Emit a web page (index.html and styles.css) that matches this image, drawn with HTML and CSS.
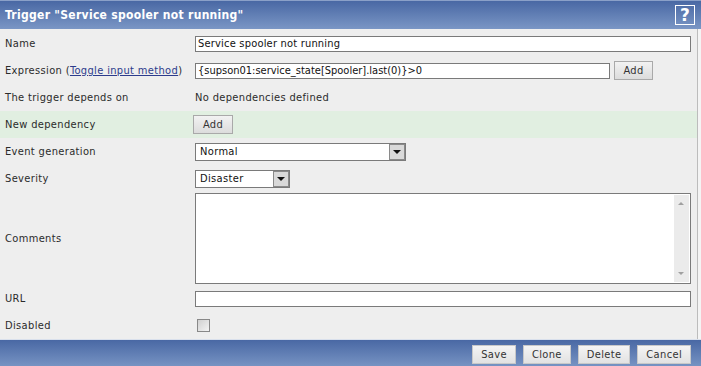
FILE: index.html
```html
<!DOCTYPE html>
<html lang="en">

<head>
    <meta charset="UTF-8">
    <title>Trigger</title>
    <link rel="stylesheet" href="styles.css">
</head>

<body>
    <div class="dialog">
        <div class="title-bar">
            <span class="title">Trigger "Service spooler not running"</span>
            <span class="help">?</span>
        </div>

        <div class="form-body">
            <div class="row">
                <div class="label">Name</div>
                <div class="field"><input class="text-input wide" type="text" value="Service spooler not running"></div>
            </div>
            <div class="row">
                <div class="label">Expression (<a href="#">Toggle input method</a>)</div>
                <div class="field">
                    <input class="text-input expr" type="text" value="{supson01:service_state[Spooler].last(0)}>0">
                    <button class="btn add-expr" type="button">Add</button>
                </div>
            </div>
            <div class="row">
                <div class="label">The trigger depends on</div>
                <div class="field plain">No dependencies defined</div>
            </div>
            <div class="row green">
                <div class="label">New dependency</div>
                <div class="field"><button class="btn add-dep" type="button">Add</button></div>
            </div>
            <div class="row">
                <div class="label">Event generation</div>
                <div class="field">
                    <div class="select event">Normal<span class="arrow"><i></i></span></div>
                </div>
            </div>
            <div class="row">
                <div class="label">Severity</div>
                <div class="field">
                    <div class="select severity">Disaster<span class="arrow"><i></i></span></div>
                </div>
            </div>
            <div class="row comments">
                <div class="label">Comments</div>
                <div class="field">
                    <div class="textarea">
                        <div class="scrollbar"><span class="up"></span><span class="down"></span></div>
                    </div>
                </div>
            </div>
            <div class="row">
                <div class="label">URL</div>
                <div class="field"><input class="text-input wide" type="text" value=""></div>
            </div>
            <div class="row">
                <div class="label">Disabled</div>
                <div class="field"><span class="checkbox"></span></div>
            </div>
        </div>

        <div class="footer">
            <button class="btn foot" type="button">Save</button>
            <button class="btn foot" type="button">Clone</button>
            <button class="btn foot" type="button">Delete</button>
            <button class="btn foot" type="button">Cancel</button>
        </div>
    </div>
</body>

</html>
```

FILE: styles.css
```css
body {
    margin: 0;
    background: #f4f4f4;
    font-family: "DejaVu Sans Condensed", "DejaVu Sans", sans-serif;
    font-size: 11px;
    letter-spacing: 0.35px;
    color: #2b2b2b;
}

.dialog {
    width: 701px;
    height: 366px;
    overflow: hidden;
}

.title-bar {
    height: 29px;
    display: flex;
    align-items: center;
    justify-content: space-between;
    padding: 0 6px 0 5px;
    box-sizing: border-box;
    background: linear-gradient(#4968a4, #7a96c5);
    border-top: 1px solid #8aa0c8;
}

.title {
    color: white;
    font-weight: bold;
    font-size: 12px;
    letter-spacing: 0.3px;
}

.help {
    width: 18px;
    height: 18px;
    border: 1px solid white;
    color: white;
    font-weight: bold;
    font-size: 17px;
    line-height: 18px;
    text-align: center;
    font-family: "DejaVu Sans", sans-serif;
}

.form-body {
    width: 697px;
    border-right: 1px solid #bcbcbc;
    background: #eeeeee;
    padding-top: 1px;
}

.row {
    display: flex;
    align-items: center;
    height: 27px;
    padding-left: 5px;
}

.row.green {
    background: #e1efe1;
}

.row.comments {
    height: 93px;
}

.label {
    width: 190px;
}

.label a {
    color: #2c3b8c;
}

.field {
    display: flex;
    align-items: center;
}

.text-input {
    box-sizing: border-box;
    height: 16px;
    border: 1px solid #7a7a7a;
    background: white;
    padding: 0 2px;
    font: inherit;
    letter-spacing: 0.2px;
    color: #111;
}

.text-input.wide {
    width: 496px;
}

.text-input.expr {
    width: 415px;
    letter-spacing: 0;
}

.btn {
    box-sizing: border-box;
    height: 19px;
    border: 1px solid #a9a9a9;
    background: linear-gradient(#f2f2f2, #dcdcdc);
    font: inherit;
    letter-spacing: 0.35px;
    color: #333;
    padding: 0 8px;
    cursor: pointer;
}

.add-expr {
    margin-left: 4px;
    width: 39px;
}

.add-dep {
    margin-left: -2px;
    width: 40px;
}

.select {
    position: relative;
    box-sizing: border-box;
    height: 18px;
    border: 1px solid #7a7a7a;
    background: white;
    padding-left: 4px;
    line-height: 16px;
    color: #111;
}

.select.event {
    width: 211px;
}

.select.severity {
    width: 95px;
}

.arrow {
    position: absolute;
    right: 0;
    top: 0;
    width: 16px;
    height: 16px;
    box-sizing: border-box;
    border: 1px solid #8a8a8a;
    background: #d9d9d9;
    display: flex;
    align-items: center;
    justify-content: center;
}

.arrow i {
    width: 0;
    height: 0;
    border-left: 4px solid transparent;
    border-right: 4px solid transparent;
    border-top: 4px solid #111;
}

.textarea {
    position: relative;
    box-sizing: border-box;
    width: 496px;
    height: 91px;
    border: 1px solid #7a7a7a;
    background: white;
}

.scrollbar {
    position: absolute;
    right: 1px;
    top: 1px;
    bottom: 1px;
    width: 15px;
    background: #ebebeb;
}

.scrollbar .up,
.scrollbar .down {
    position: absolute;
    left: 4px;
    width: 0;
    height: 0;
    border-left: 3px solid transparent;
    border-right: 3px solid transparent;
}

.scrollbar .up {
    top: 7px;
    border-bottom: 3px solid #a0a0a0;
}

.scrollbar .down {
    bottom: 7px;
    border-top: 3px solid #a0a0a0;
}

.checkbox {
    display: block;
    margin-left: 2px;
    width: 11px;
    height: 11px;
    border: 1px solid #888;
    background: linear-gradient(135deg, #d0d0d0, #f4f4f4);
}

.footer {
    height: 28px;
    display: flex;
    align-items: center;
    justify-content: flex-end;
    gap: 7px;
    padding-right: 10px;
    background: linear-gradient(#4968a4, #7a96c5);
    border-top: 1px solid #d9e0ec;
}

.btn.foot {
    height: 19px;
    padding: 0 8px;
    border-color: #c8c8c8;
    background: linear-gradient(#f4f4f4, #e2e2e2);
}
```
